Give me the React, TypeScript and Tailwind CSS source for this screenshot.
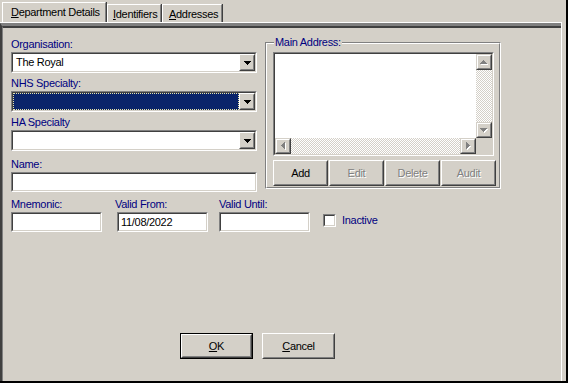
import React from 'react';

const F = "font-['Liberation_Sans',Arial,sans-serif] text-[11px] leading-[13px] tracking-[-0.3px]";

type Kids = { className?: string; innerClass?: string; children?: React.ReactNode };

function Sunken({ className = '', innerClass = 'bg-white', children }: Kids) {
  return (
    <div className={`border border-t-[#808080] border-l-[#808080] border-b-white border-r-white ${className}`}>
      <div className={`h-full w-full border border-t-[#404040] border-l-[#404040] border-b-[#d4d0c8] border-r-[#d4d0c8] ${innerClass}`}>
        {children}
      </div>
    </div>
  );
}

function Raised({ className = '', innerClass = '', children }: Kids) {
  return (
    <div className={`border border-t-white border-l-white border-b-[#404040] border-r-[#404040] bg-[#d4d0c8] ${className}`}>
      <div className={`h-full w-full border border-t-[#d4d0c8] border-l-[#d4d0c8] border-b-[#808080] border-r-[#808080] ${innerClass}`}>
        {children}
      </div>
    </div>
  );
}

function ScrollBtn({ className = '', children }: Kids) {
  return (
    <div className={`border border-t-[#d4d0c8] border-l-[#d4d0c8] border-b-[#404040] border-r-[#404040] bg-[#d4d0c8] ${className}`}>
      <div className="h-full w-full border border-t-white border-l-white border-b-[#808080] border-r-[#808080] flex items-center justify-center">
        {children}
      </div>
    </div>
  );
}

type Dir = 'up' | 'down' | 'left' | 'right';
const RECTS: Record<Dir, [number, number, number, number][]> = {
  down: [[0, 0, 7, 1], [1, 1, 5, 1], [2, 2, 3, 1], [3, 3, 1, 1]],
  up: [[3, 0, 1, 1], [2, 1, 3, 1], [1, 2, 5, 1], [0, 3, 7, 1]],
  left: [[3, 0, 1, 7], [2, 1, 1, 5], [1, 2, 1, 3], [0, 3, 1, 1]],
  right: [[0, 0, 1, 7], [1, 1, 1, 5], [2, 2, 1, 3], [3, 3, 1, 1]],
};

function Tri({ dir, disabled = false }: { dir: Dir; disabled?: boolean }) {
  const horiz = dir === 'left' || dir === 'right';
  const w = horiz ? 4 : 7;
  const h = horiz ? 7 : 4;
  return (
    <svg width={w + 1} height={h + 1} viewBox={`0 0 ${w + 1} ${h + 1}`} shapeRendering="crispEdges" className="block">
      {disabled &&
        RECTS[dir].map((r, i) => <rect key={'s' + i} x={r[0] + 1} y={r[1] + 1} width={r[2]} height={r[3]} fill="#ffffff" />)}
      {RECTS[dir].map((r, i) => (
        <rect key={i} x={r[0]} y={r[1]} width={r[2]} height={r[3]} fill={disabled ? '#808080' : '#000000'} />
      ))}
    </svg>
  );
}

function Label({ children, className = '' }: { children: React.ReactNode; className?: string }) {
  return <div className={`h-[14px] text-[#000080] whitespace-nowrap ${className}`}>{children}</div>;
}

function Combo({ value, selected = false }: { value?: string; selected?: boolean }) {
  return (
    <Sunken className="h-[21px] w-[246px]" innerClass="bg-white flex">
      {selected ? (
        <div className="flex-1 bg-[#0a246a] border border-dotted border-[#e8e4a8]" />
      ) : (
        <div className="flex-1 pl-[3px] flex items-center text-black">{value}</div>
      )}
      <Raised className="w-[16px] h-full" innerClass="flex items-center justify-center pl-[1px] pt-[1px]">
        <Tri dir="down" />
      </Raised>
    </Sunken>
  );
}

function TextBox({ className = '', value = '' }: { className?: string; value?: string }) {
  return (
    <Sunken className={`h-[20px] ${className}`} innerClass="bg-white flex items-center pl-[2px] text-black">
      {value}
    </Sunken>
  );
}

function Btn({ label, disabled = false }: { label: string; disabled?: boolean }) {
  return (
    <Raised className="w-[55px] h-[26px]" innerClass="flex items-center justify-center">
      <span className={disabled ? 'text-[#808080] [text-shadow:1px_1px_0_#ffffff]' : 'text-black'}>{label}</span>
    </Raised>
  );
}

const CHECK = 'bg-[image:repeating-conic-gradient(#ffffff_0%_25%,#d4d0c8_0%_50%)] bg-[length:2px_2px]';

function Tab({ children, selected = false, className = '' }: { children: React.ReactNode; selected?: boolean; className?: string }) {
  return (
    <div className={`border-r border-r-[#404040] ${selected ? 'h-[20px]' : 'h-[18px]'} ${className}`}>
      <div className="h-full border-l border-t border-l-white border-t-white border-r border-r-[#808080] pt-[3px] text-black whitespace-nowrap">
        {children}
      </div>
    </div>
  );
}

export default function App() {
  return (
    <div className={`w-[568px] h-[383px] bg-[#d4d0c8] border-r-2 border-b-2 border-r-black border-b-black flex flex-col overflow-hidden ${F}`}>
      {/* Tab strip */}
      <div className="h-[22px] flex items-end pl-[2px]">
        <Tab selected className="w-[105px]">
          <div className="pl-[8px]">
            <u>D</u>epartment Details
          </div>
        </Tab>
        <Tab className="w-[55px]">
          <div className="pl-[5px]">
            <u>I</u>dentifiers
          </div>
        </Tab>
        <Tab className="w-[61px]">
          <div className="pl-[6px]">
            <u>A</u>ddresses
          </div>
        </Tab>
      </div>

      {/* Panel */}
      <div className="flex-1 mr-[4px] border-t border-r border-t-white border-r-white flex flex-col">
        <div className="flex-1 flex flex-col border-t-[3px] border-l-2 border-t-[#808080] border-l-[#404040]">
          <div className="flex-1 flex flex-col border-t-2 border-l border-t-[#404040] border-l-[#808080] pl-[8px]">
            {/* Top section */}
            <div className="flex items-start">
              <div className="w-[246px] pt-[10px] flex flex-col">
                <Label>Organisation:</Label>
                <Combo value="The Royal" />
                <Label className="mt-[4px]">NHS Specialty:</Label>
                <Combo selected />
                <Label className="mt-[4px]">HA Specialty</Label>
                <Combo />
                <Label className="mt-[7px]">Name:</Label>
                <TextBox className="w-[246px]" />
              </div>

              {/* Group box */}
              <div className="relative ml-[8px] mt-[14px] w-[236px] border border-t-[#808080] border-l-[#808080] border-b-white border-r-white">
                <div className="border border-t-white border-l-white border-b-[#808080] border-r-[#808080] pl-[6px] pr-[3px] pt-[8px] pb-[1px]">
                  <Sunken className="w-[221px] h-[104px]" innerClass="bg-white flex flex-col">
                    <div className="flex-1 flex">
                      <div className="flex-1 bg-white" />
                      <div className="w-[16px] flex flex-col">
                        <ScrollBtn className="h-[16px]">
                          <Tri dir="up" disabled />
                        </ScrollBtn>
                        <div className={`flex-1 ${CHECK}`} />
                        <ScrollBtn className="h-[16px]">
                          <Tri dir="down" disabled />
                        </ScrollBtn>
                      </div>
                    </div>
                    <div className="h-[16px] flex">
                      <ScrollBtn className="w-[16px]">
                        <Tri dir="left" disabled />
                      </ScrollBtn>
                      <div className={`flex-1 ${CHECK}`} />
                      <ScrollBtn className="w-[16px]">
                        <Tri dir="right" disabled />
                      </ScrollBtn>
                      <div className="w-[16px] bg-[#d4d0c8]" />
                    </div>
                  </Sunken>
                  <div className="flex gap-[1px] mt-[4px]">
                    <Btn label="Add" />
                    <Btn label="Edit" disabled />
                    <Btn label="Delete" disabled />
                    <Btn label="Audit" disabled />
                  </div>
                </div>
                <div className="absolute -top-[7px] left-[8px] px-[1px] bg-[#d4d0c8] text-[#000080] whitespace-nowrap">
                  Main Address:
                </div>
              </div>
            </div>

            {/* Bottom row of fields */}
            <div className="flex items-start mt-[6px]">
              <div className="flex flex-col w-[91px]">
                <Label>Mnemonic:</Label>
                <TextBox className="w-[91px]" />
              </div>
              <div className="flex flex-col ml-[13px]">
                <Label>Valid From:</Label>
                <TextBox className="w-[91px] ml-[2px]" value="11/08/2022" />
              </div>
              <div className="flex flex-col ml-[11px]">
                <Label>Valid Until:</Label>
                <TextBox className="w-[91px]" />
              </div>
              <div className="flex items-center ml-[13px] mt-[16px] gap-[6px]">
                <Sunken className="w-[13px] h-[13px]" />
                <span className="text-[#000080]">Inactive</span>
              </div>
            </div>

            {/* OK / Cancel */}
            <div className="flex gap-[9px] mt-[101px] pl-[169px]">
              <div className="w-[73px] h-[26px] border border-black">
                <div className="h-full w-full border border-t-white border-l-white border-b-[#404040] border-r-[#404040]">
                  <div className="h-full w-full border border-t-[#d4d0c8] border-l-[#d4d0c8] border-b-[#808080] border-r-[#808080] flex items-center justify-center text-black">
                    <span>
                      <u>O</u>K
                    </span>
                  </div>
                </div>
              </div>
              <Raised className="w-[73px] h-[26px]" innerClass="flex items-center justify-center text-black">
                <span>
                  <u>C</u>ancel
                </span>
              </Raised>
            </div>
          </div>
        </div>
      </div>
    </div>
  );
}
